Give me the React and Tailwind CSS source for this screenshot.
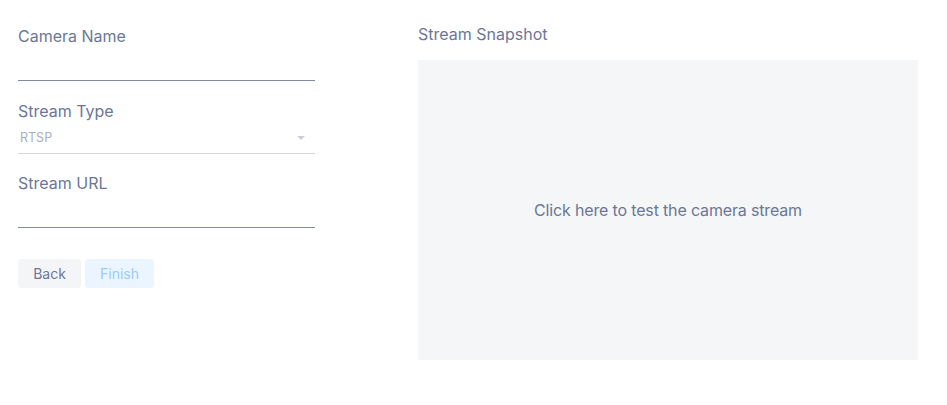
const Field = ({ label, children, className = "" }) => (
  <div className={className}>
    <label className="block text-base leading-6 text-[#6b7797]">{label}</label>
    {children}
  </div>
);

const App = () => {
  return (
    <div
      className="flex w-[947px] h-[405px] bg-white pl-[18px] pt-6"
      style={{ fontFamily: "Inter, 'Noto Sans', sans-serif" }}
    >
      {/* Form column */}
      <div className="w-[297px] shrink-0">
        <Field label="Camera Name">
          <input className="block w-full h-[33px] border-b border-[#7f8aa3] outline-none bg-transparent" />
        </Field>

        <Field label="Stream Type" className="mt-[18px]">
          <div className="flex items-center justify-between h-[31px] border-b border-[#d3d7df] pl-[2px] pr-[10px]">
            <span className="text-[12.5px] text-[#a9afbd]">RTSP</span>
            <span className="w-0 h-0 border-l-[4px] border-r-[4px] border-t-[4px] border-l-transparent border-r-transparent border-t-[#c9ced8]" />
          </div>
        </Field>

        <Field label="Stream URL" className="mt-[17px]">
          <input className="block w-full h-[33px] border-b border-[#7f8aa3] outline-none bg-transparent" />
        </Field>

        <div className="flex gap-1 mt-[31px]">
          <button className="h-[29px] w-[63px] rounded bg-[#f4f5f7] text-sm text-[#6b7797]">
            Back
          </button>
          <button className="h-[29px] w-[69px] rounded bg-[#eaf5ff] text-sm text-[#9ccbfa]">
            Finish
          </button>
        </div>
      </div>

      {/* Snapshot column */}
      <div className="ml-[103px] w-[500px] -mt-[2px]">
        <div className="text-base leading-6 text-[#6b7797] mb-[14px]">Stream Snapshot</div>
        <div className="flex items-center justify-center h-[300px] bg-[#f5f6f8] cursor-pointer">
          <span className="text-base tracking-[-0.01em] text-[#6b7797]">
            Click here to test the camera stream
          </span>
        </div>
      </div>
    </div>
  );
};

export default App;
